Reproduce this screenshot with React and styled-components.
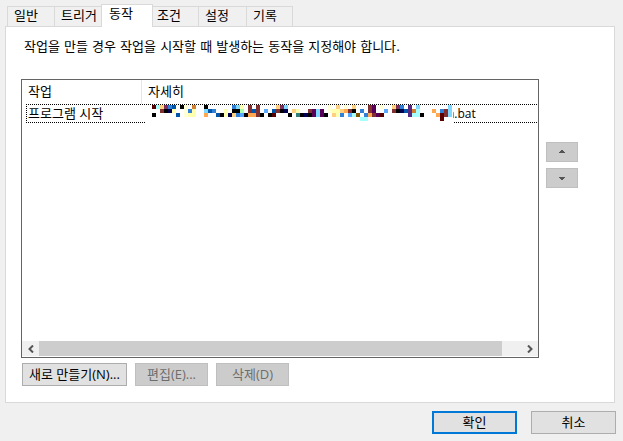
import React, { useState } from 'react'
import styled, { createGlobalStyle, css } from 'styled-components'

const GlobalStyle = createGlobalStyle`
  * {
    box-sizing: border-box;
  }
  body {
    margin: 0;
    background: #f0f0f0;
    color: #000;
    font: 13px/18px 'Open Sans', 'Noto Sans CJK KR', sans-serif;
  }
  button {
    font: inherit;
    color: inherit;
  }
`

const Dialog = styled.form`
  display: flex;
  flex-direction: column;
  min-height: 100vh;
  padding: 4px 7px 7px 5px;
`

const TabList = styled.div`
  display: flex;
  align-items: flex-end;
  padding-left: 2px;
`

const Tab = styled.button`
  width: 48px;
  height: 20px;
  padding: 0 0 2px 6px;
  border: 0 solid #d9d9d9;
  border-width: 1px 0 0 1px;
  background: #f0f0f0;
  text-align: left;
  line-height: 17px;
  white-space: nowrap;

  &:first-child {
    width: 47px;
  }
  &:last-child {
    width: 47px;
    border-right-width: 1px;
  }

  ${({ $active }) =>
    $active &&
    css`
      position: relative;
      width: 52px;
      height: 23px;
      margin: 0 -3px -1px -1px;
      padding: 0 0 5px 7px;
      border-width: 1px 1px 0;
      background: #fff;
    `}
`

const Panel = styled.section`
  flex: 1;
  display: flex;
  flex-direction: column;
  margin-right: 1px;
  padding: 10px 36px 16px 15px;
  border: 1px solid #d9d9d9;
  background: #fff;
`

const Description = styled.p`
  margin: 0 0 23px;
  padding-left: 3px;
  font-family: 'DejaVu Sans', 'Noto Sans CJK KR', sans-serif;
  line-height: 19px;
`

const ListArea = styled.div`
  flex: 1;
  display: flex;
  gap: 7px;
`

const ListBox = styled.div`
  flex: 1;
  display: flex;
  flex-direction: column;
  justify-content: space-between;
  padding-bottom: 1px;
  border: 1px solid #646464;
`

const TableWrap = styled.div`
  padding-left: 4px;
`

const Table = styled.table`
  width: 100%;
  table-layout: fixed;
  border-collapse: separate;
  border-spacing: 0;
`

const HeadCell = styled.th`
  width: ${({ $width }) => $width || 'auto'};
  height: 24px;
  padding: 0 0 2px ${({ $width }) => ($width ? '2px' : '6px')};
  border-right: ${({ $width }) => ($width ? '1px solid #e5e5e5' : '0')};
  font-weight: normal;
  text-align: left;
`

const dotsX = 'repeating-linear-gradient(90deg, #000 0 1px, transparent 1px 2px)'
const dotsY = 'repeating-linear-gradient(#000 0 1px, transparent 1px 2px)'

const Cell = styled.td`
  position: relative;
  height: 19px;
  padding: 1px 0;
  background: ${dotsX} top / 100% 1px no-repeat, ${dotsX} bottom / 100% 1px no-repeat;
  line-height: 17px;
  white-space: nowrap;

  &:first-child {
    padding-left: 2px;
    background: ${dotsX} top / 100% 1px no-repeat, ${dotsX} bottom / 100% 1px no-repeat,
      ${dotsY} left / 1px 100% no-repeat;
  }
  &:last-child {
    padding-left: 305px;
    font-size: 12px;
  }
`

const MosaicSvg = styled.svg`
  position: absolute;
  top: 1px;
  left: 3px;
  width: 308px;
  height: 18px;
  background: #fff;
`

const ScrollBar = styled.div`
  display: flex;
  height: 15px;
  background: #f0f0f0;
`

const ScrollButton = styled.button`
  display: flex;
  align-items: center;
  justify-content: center;
  width: 17px;
  padding: 0;
  border: 0;
  background: transparent;
`

const Thumb = styled.div`
  flex: 1;
  margin-right: 19px;
  background: #cdcdcd;
`

const OrderButtons = styled.div`
  display: flex;
  flex-direction: column;
  gap: 6px;
  padding-top: 63px;
`

const Button = styled.button`
  display: flex;
  align-items: center;
  justify-content: center;
  width: ${({ $width }) => $width || '73px'};
  height: ${({ $height }) => $height || '23px'};
  padding: 0;
  border: ${({ $primary }) => ($primary ? '2px solid #0078d7' : '1px solid #adadad')};
  background: #e1e1e1;
  line-height: 19px;
  white-space: nowrap;

  &:disabled {
    border-color: #bfbfbf;
    background: #ccc;
    color: #6d6d6d;
  }
`

const Actions = styled.div`
  display: flex;
  gap: 8px;
  padding: 5px 0 0 1px;
`

const Footer = styled.footer`
  display: flex;
  justify-content: flex-end;
  gap: 14px;
  padding-top: 8px;
`

const palette = {
  k: '#000000',
  r: '#580000',
  n: '#803030',
  v: '#803058',
  p: '#580058',
  i: '#582880',
  b: '#0055a8',
  u: '#3080d8',
  d: '#000050',
  l: '#58a8ff',
  c: '#80d8ff',
  w: '#a8ffff',
  y: '#ffffb0',
  s: '#ffffd8',
  o: '#ffd080',
  a: '#ffa850',
  e: '#d08030',
  t: '#308080',
  g: '#a8ffb0',
  m: '#805800',
}

// one letter per 4px block, dots are left white
const mosaicRows = [
  'rwovub.ks.e..k......ucy.n.n....ovc..........s.o.s.o...np.s..ovu.i.c.......c',
  '..nkdy..suy..cbu..y.kkg.nbn.l.bnkd.oy..npcp.syyoank.u.np..l.nkdbiew...a.unc',
  'k.....b.syy..a..bkydoulkaank.kr...k.tkdkpcpk.oyu.lwm.uanpr......iwwk...arnc',
  '....................................................ww..................r..',
]

const Mosaic = () => (
  <MosaicSvg viewBox="0 0 308 18" shapeRendering="crispEdges" aria-hidden="true">
    {mosaicRows.map((row, y) =>
      [...row].map(
        (key, x) =>
          palette[key] && (
            <rect key={`${x}-${y}`} x={7 + x * 4} y={y * 4} width="4" height="4" fill={palette[key]} />
          )
      )
    )}
  </MosaicSvg>
)

const Chevron = ({ right }) => (
  <svg width="6" height="8" viewBox="0 0 6 8" fill="none" stroke="#555" strokeWidth="2">
    <path d={right ? 'M1 .5 4.5 4 1 7.5' : 'M5 .5 1.5 4 5 7.5'} />
  </svg>
)

const Triangle = ({ down }) => (
  <svg width="6" height="4" viewBox="0 0 6 4" fill="#555" shapeRendering="crispEdges">
    <path d={down ? 'M0 1h6v1H5v1H4v1H2V3H1V2H0z' : 'M0 3h6V2H5V1H4V0H2v1H1v1H0z'} />
  </svg>
)

const tabs = ['일반', '트리거', '동작', '조건', '설정', '기록']

const App = () => {
  const [active, setActive] = useState('동작')

  return (
    <>
      <GlobalStyle />
      <Dialog onSubmit={(e) => e.preventDefault()}>
        <TabList role="tablist">
          {tabs.map((tab) => (
            <Tab
              key={tab}
              type="button"
              role="tab"
              aria-selected={tab === active}
              $active={tab === active}
              onClick={() => setActive(tab)}
            >
              {tab}
            </Tab>
          ))}
        </TabList>
        <Panel role="tabpanel">
          <Description>작업을 만들 경우 작업을 시작할 때 발생하는 동작을 지정해야 합니다.</Description>
          <ListArea>
            <ListBox>
              <TableWrap>
                <Table>
                  <thead>
                    <tr>
                      <HeadCell $width="116px">작업</HeadCell>
                      <HeadCell>자세히</HeadCell>
                    </tr>
                  </thead>
                  <tbody>
                    <tr>
                      <Cell>프로그램 시작</Cell>
                      <Cell>
                        n.bat
                        <Mosaic />
                      </Cell>
                    </tr>
                  </tbody>
                </Table>
              </TableWrap>
              <ScrollBar>
                <ScrollButton type="button" aria-label="왼쪽">
                  <Chevron />
                </ScrollButton>
                <Thumb />
                <ScrollButton type="button" aria-label="오른쪽">
                  <Chevron right />
                </ScrollButton>
              </ScrollBar>
            </ListBox>
            <OrderButtons>
              <Button type="button" $width="32px" $height="20px" disabled aria-label="위로">
                <Triangle />
              </Button>
              <Button type="button" $width="32px" $height="20px" disabled aria-label="아래로">
                <Triangle down />
              </Button>
            </OrderButtons>
          </ListArea>
          <Actions>
            <Button type="button" $width="105px">새로 만들기(N)...</Button>
            <Button type="button" disabled>편집(E)...</Button>
            <Button type="button" disabled>삭제(D)</Button>
          </Actions>
        </Panel>
        <Footer>
          <Button type="submit" $width="85px" $primary>확인</Button>
          <Button type="button" $width="85px">취소</Button>
        </Footer>
      </Dialog>
    </>
  )
}

export default App
